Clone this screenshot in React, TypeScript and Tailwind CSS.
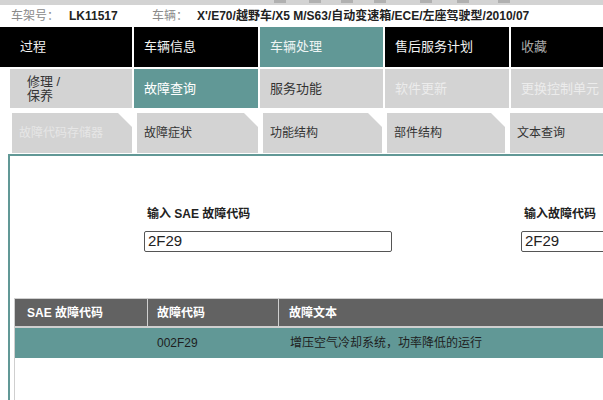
const TEAL = "bg-[#619896]";

const topMarks = [274, 309, 341, 374, 420, 457, 498];

const TopStrip = () => (
    <div className="relative h-[5px] bg-[#d3d3d3] flex-shrink-0">
        {topMarks.map((x) => (
            <div
                key={x}
                className="absolute top-0 h-[3px] w-[12px] bg-[#b0b0b0]"
                style={{ left: x }}
            />
        ))}
    </div>
);

const VehicleBar = () => (
    <div className="h-[22px] flex items-center text-[12px] pl-[11px] whitespace-nowrap">
        <span className="text-[#8a8a8a] w-[58px]">车架号：</span>
        <span className="font-bold text-[#222] w-[83px]">LK11517</span>
        <span className="text-[#8a8a8a] w-[45px]">车辆：</span>
        <span className="font-bold text-[#222]">
            X'/E70/越野车/X5 M/S63/自动变速箱/ECE/左座驾驶型/2010/07
        </span>
    </div>
);

type Tab = { label: string; w: number; cls: string; pl?: number };

const mainTabs: Tab[] = [
    { label: "过程", w: 132, cls: "bg-black text-[#f2f2f2]", pl: 20 },
    { label: "车辆信息", w: 124, cls: "bg-black text-[#f2f2f2]" },
    { label: "车辆处理", w: 123, cls: `${TEAL} text-[#eef4f4]` },
    { label: "售后服务计划", w: 124, cls: "bg-black text-[#f2f2f2]" },
    { label: "收藏", w: 124, cls: "bg-black text-[#a8a8a8]" },
];

const subTabs: Tab[] = [
    { label: "故障查询", w: 124, cls: `${TEAL} text-white` },
    { label: "服务功能", w: 123, cls: "bg-[#d3d3d3] text-[#333]" },
    { label: "软件更新", w: 124, cls: "bg-[#d3d3d3] text-[#ececec]" },
    { label: "更换控制单元", w: 124, cls: "bg-[#d3d3d3] text-[#ececec]" },
];

const thirdTabs: { label: string; w: number; muted?: boolean; cut?: boolean }[] = [
    { label: "故障代码存储器", w: 120, muted: true, cut: true },
    { label: "故障症状", w: 121, cut: true },
    { label: "功能结构", w: 119, cut: true },
    { label: "部件结构", w: 118, cut: true },
    { label: "文本查询", w: 124 },
];

const MainNav = () => (
    <div className="h-[40px] flex gap-[2px] flex-shrink-0 text-[13px]">
        {mainTabs.map((t) => (
            <div
                key={t.label}
                className={`${t.cls} flex-shrink-0 flex items-center`}
                style={{ width: t.w, paddingLeft: t.pl ?? 10 }}
            >
                {t.label}
            </div>
        ))}
    </div>
);

const SubNav = () => (
    <div className="h-[39px] mt-[2px] flex gap-[2px] flex-shrink-0 text-[13px] pl-[10px]">
        <div className="w-[122px] flex-shrink-0 bg-[#d3d3d3] text-[#333] flex flex-col justify-center pl-[17px] leading-[14px]">
            <span>修理 /</span>
            <span>保养</span>
        </div>
        {subTabs.map((t) => (
            <div
                key={t.label}
                className={`${t.cls} flex-shrink-0 flex items-center pl-[10px]`}
                style={{ width: t.w }}
            >
                {t.label}
            </div>
        ))}
    </div>
);

const ThirdNav = () => (
    <div className="h-[40px] mt-[5px] flex gap-[5px] flex-shrink-0 text-[12px] pl-[12px]">
        {thirdTabs.map((t) => (
            <div
                key={t.label}
                className={`flex-shrink-0 flex items-center pl-[7px] bg-[#d3d3d3] ${
                    t.muted ? "text-[#e6e6e6]" : "text-[#333]"
                } ${t.cut ? "[clip-path:polygon(0_0,calc(100%-14px)_0,100%_14px,100%_100%,0_100%)]" : ""}`}
                style={{ width: t.w }}
            >
                {t.label}
            </div>
        ))}
    </div>
);

const CodeField = ({ label, w }: { label: string; w: number }) => (
    <div className="flex flex-col flex-shrink-0">
        <div className="text-[12px] font-bold text-[#222] leading-[16px] pl-[3px]">
            {label}
        </div>
        <div
            className="mt-[9px] h-[21px] border border-[#555] rounded-[2px] flex items-center pl-[3px] text-[15px] text-[#222] bg-white"
            style={{ width: w }}
        >
            2F29
        </div>
    </div>
);

const ResultTable = () => (
    <div className="ml-[4px] mt-[46px] border-t border-l border-[#cfcfcf] flex-1 text-[12px]">
        <div className="h-[29px] flex gap-[1px] bg-[#cfcfcf] border-b-2 border-[#cfcfcf] font-bold text-white">
            <div className="w-[132px] bg-[#626262] flex items-center pl-[12px]">SAE 故障代码</div>
            <div className="w-[130px] bg-[#626262] flex items-center pl-[9px]">故障代码</div>
            <div className="flex-1 bg-[#626262] flex items-center pl-[10px]">故障文本</div>
        </div>
        <div className={`h-[30px] flex ${TEAL} text-[#1e1e1e]`}>
            <div className="w-[133px]" />
            <div className="w-[132px] flex items-center pl-[9px]">002F29</div>
            <div className="flex-1 flex items-center pl-[10px] whitespace-nowrap">
                增压空气冷却系统，功率降低的运行
            </div>
        </div>
    </div>
);

export default function App() {
    return (
        <div
            className="w-[603px] h-[400px] overflow-hidden bg-white flex flex-col"
            style={{ fontFamily: '"Liberation Sans", Arial, "Noto Sans CJK SC", sans-serif' }}
        >
            <TopStrip />
            <VehicleBar />
            <MainNav />
            <SubNav />
            <ThirdNav />
            <div className="ml-[8px] mt-[1px] flex-1 border-t-2 border-l-2 border-[#619896] flex flex-col min-h-0">
                <div className="pt-[50px] pl-[134px] flex gap-[129px]">
                    <CodeField label="输入 SAE 故障代码" w={248} />
                    <CodeField label="输入故障代码" w={200} />
                </div>
                <ResultTable />
            </div>
        </div>
    );
}
